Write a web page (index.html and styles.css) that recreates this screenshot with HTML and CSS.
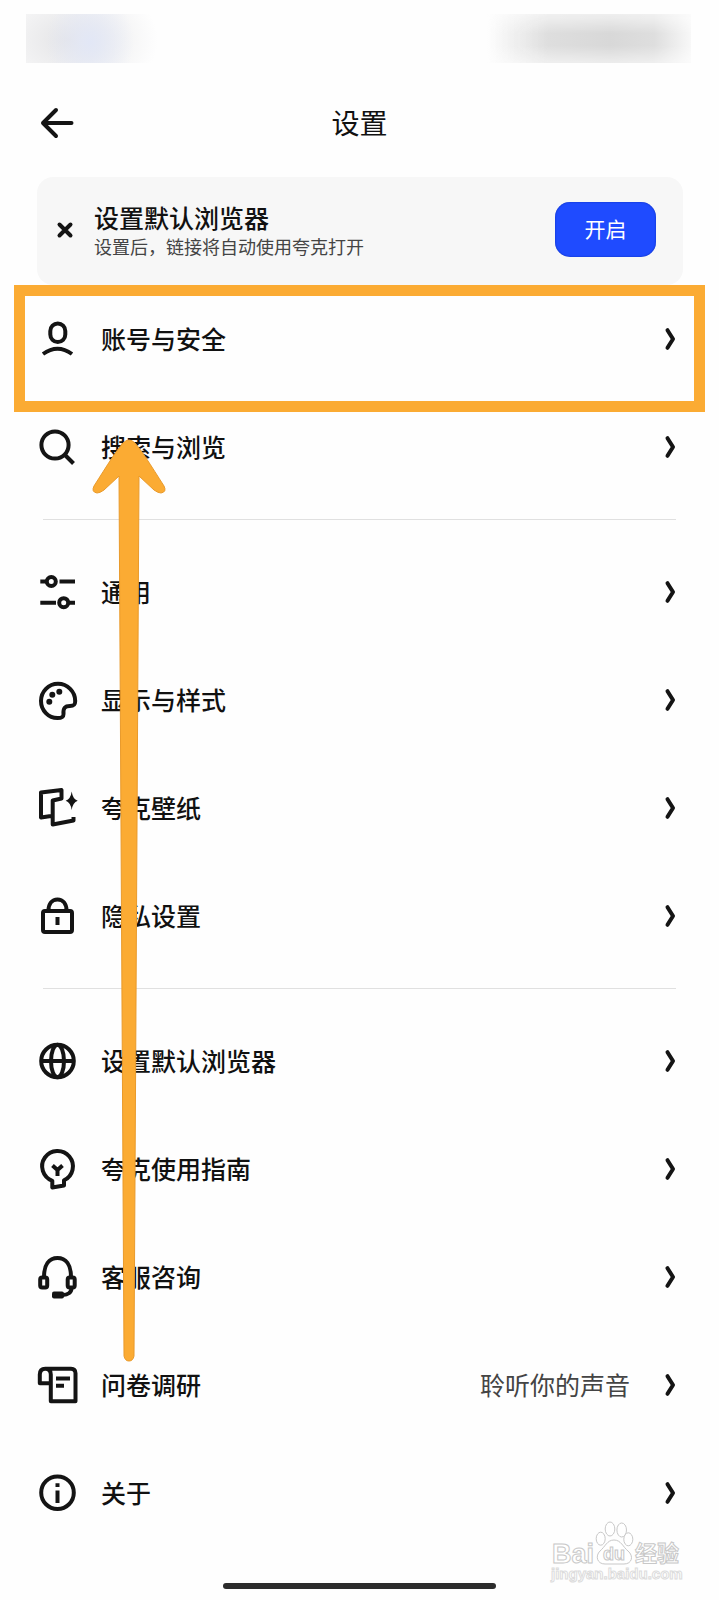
FILE: index.html
```html
<!DOCTYPE html>
<html lang="zh-CN">
<head>
    <meta charset="UTF-8">
    <meta name="viewport" content="width=device-width, initial-scale=1">
    <title>设置</title>
    <link rel="stylesheet" href="styles.css">
</head>
<body>
    <svg class="symbols" aria-hidden="true">
        <symbol id="chevron" viewBox="0 0 12 24">
            <path d="M3.5 3.2 9 12 3.5 20.8"/>
        </symbol>
    </svg>

    <div class="page">
        <div class="status-bar">
            <div class="status-left"></div>
            <div class="status-right"></div>
        </div>

        <header class="header">
            <button class="back" aria-label="返回">
                <svg class="back-icon" viewBox="0 0 36 36"><path d="M32.5 18H4M17 5 4 18l13 13"/></svg>
            </button>
            <h1 class="title">设置</h1>
        </header>

        <section class="card">
            <button class="close" aria-label="关闭">
                <svg class="close-icon" viewBox="0 0 18 18"><path d="m3.5 3.5 11 11M14.500 3.500l-11 11"/></svg>
            </button>
            <div class="card-text">
                <h2 class="card-title">设置默认浏览器</h2>
                <p class="card-desc">设置后，链接将自动使用夸克打开</p>
            </div>
            <button class="open">开启</button>
        </section>

        <nav class="menu">
            <ul class="group">
                <li class="item marked">
                    <a class="row" href="#account">
                        <svg class="icon" viewBox="0 0 40 40"><rect x="13.300" y="4.500" width="15" height="18.500" rx="7.500"/><path d="M6 35q14.500-10.500 29 0"/></svg>
                        <span class="name">账号与安全</span>
                        <svg class="chevron"><use href="#chevron"/></svg>
                    </a>
                </li>
                <li class="item">
                    <a class="row" href="#search">
                        <svg class="icon" viewBox="0 0 40 40"><circle cx="18" cy="18" r="13.600"/><path d="m27.500 27.500 9 9"/></svg>
                        <span class="name">搜索与浏览</span>
                        <svg class="chevron"><use href="#chevron"/></svg>
                    </a>
                </li>
            </ul>

            <ul class="group">
                <li class="item">
                    <a class="row" href="#general">
                        <svg class="icon" viewBox="0 0 40 40"><circle cx="14.300" cy="9.500" r="4.500"/><circle cx="26.700" cy="30.700" r="4.500"/><path d="M3.300 9.500H9M22.500 9.500H38M3.300 30.700H19M32 30.700h6"/></svg>
                        <span class="name">通用</span>
                        <svg class="chevron"><use href="#chevron"/></svg>
                    </a>
                </li>
                <li class="item">
                    <a class="row" href="#display">
                        <svg class="icon" viewBox="0 0 40 40"><path d="M38.200 21C38.200 11.500 30.500 3.800 21 3.800S4 11.500 4 21s7.500 17 16.500 17c4.500 0 6-1 6-4-.500-6 1.500-8 6.500-8 4 0 5.200-1 5.200-5z"/><g class="solid"><circle cx="15.300" cy="14.700" r="3"/><circle cx="22.300" cy="11.700" r="3"/><circle cx="12.300" cy="21.700" r="3"/></g></svg>
                        <span class="name">显示与样式</span>
                        <svg class="chevron"><use href="#chevron"/></svg>
                    </a>
                </li>
                <li class="item">
                    <a class="row" href="#wallpaper">
                        <svg class="icon" viewBox="0 0 40 40"><path d="M14 28 4 29.500V4.500L24.500 2V10.500L15.700 12.500V36.500L36.500 32.500V29"/><path class="solid" d="M34.700 3.500q1 7.500 6 9.200-5 1.800-6 9.300-1-7.500-6-9.300 5-1.700 6-9.200z"/></svg>
                        <span class="name">夸克壁纸</span>
                        <svg class="chevron"><use href="#chevron"/></svg>
                    </a>
                </li>
                <li class="item">
                    <a class="row" href="#privacy">
                        <svg class="icon" viewBox="0 0 40 40"><rect x="6" y="15" width="29" height="21" rx="2"/><path d="M11.500 14.500C11.500 8 15 3.500 20.500 3.500s9 4.500 9 11M20.500 21v8"/></svg>
                        <span class="name">隐私设置</span>
                        <svg class="chevron"><use href="#chevron"/></svg>
                    </a>
                </li>
            </ul>

            <ul class="group">
                <li class="item">
                    <a class="row" href="#browser">
                        <svg class="icon" viewBox="0 0 40 40"><circle cx="20.500" cy="20" r="16.300"/><ellipse cx="20.500" cy="20" rx="6.500" ry="16.300"/><path d="M4 20h33"/></svg>
                        <span class="name">设置默认浏览器</span>
                        <svg class="chevron"><use href="#chevron"/></svg>
                    </a>
                </li>
                <li class="item">
                    <a class="row" href="#guide">
                        <svg class="icon" viewBox="0 0 40 40"><path d="M15.300 38.500v-6.700A15.400 15.400 0 1 1 27 31.300V36.500z"/><path d="m15.500 16.500 5 4.500 5-4.500M20.500 20.500v6.500"/></svg>
                        <span class="name">夸克使用指南</span>
                        <svg class="chevron"><use href="#chevron"/></svg>
                    </a>
                </li>
                <li class="item">
                    <a class="row" href="#service">
                        <svg class="icon" viewBox="0 0 40 40"><path d="M7 20C7 8 12 1 20.500 1S34 8 34 20M34.500 31c0 4-3 7-9 7"/><rect x="3.200" y="20.500" width="7" height="10" rx="2"/><rect x="30.700" y="20.500" width="7" height="10" rx="2"/><rect class="solid" x="15" y="34.500" width="12" height="7" rx="2"/></svg>
                        <span class="name">客服咨询</span>
                        <svg class="chevron"><use href="#chevron"/></svg>
                    </a>
                </li>
                <li class="item">
                    <a class="row" href="#survey">
                        <svg class="icon" viewBox="0 0 40 40"><path d="M8.300 3.700H34q4.500 0 4.500 4.500V36.300H13.800V9.500q0-5.800-5.500-5.800T2.800 9.500v8.800h11M19 13.500h14M19 20.700h8"/></svg>
                        <span class="name">问卷调研</span>
                        <span class="hint">聆听你的声音</span>
                        <svg class="chevron"><use href="#chevron"/></svg>
                    </a>
                </li>
                <li class="item">
                    <a class="row" href="#about">
                        <svg class="icon" viewBox="0 0 40 40"><circle cx="20.500" cy="19.700" r="16.300"/><path d="M20.500 10.300V14M20.500 17.500v12.500"/></svg>
                        <span class="name">关于</span>
                        <svg class="chevron"><use href="#chevron"/></svg>
                    </a>
                </li>
            </ul>

            <!-- arrow pointing up at the marked row -->
            <svg class="arrow" viewBox="0 0 74 924">
                <path d="M31 4Q37-2 43 4C50 12 58 25 72 47Q75 53 69 54Q66 54 62 51L47 37 42 917Q41 922 37 922T32 917L27 37 12 51Q8 54 5 54Q-1 53 2 47C16 25 24 12 31 4z"/>
            </svg>
        </nav>

        <footer class="footer">
            <div class="home-bar"></div>
            <svg class="watermark" viewBox="0 0 132 66">
                <ellipse cx="50.700" cy="16.700" rx="4.500" ry="6.500"/>
                <ellipse cx="60" cy="7" rx="4.800" ry="7"/>
                <ellipse cx="71.700" cy="8" rx="4.800" ry="7"/>
                <ellipse cx="78.300" cy="17.300" rx="4.500" ry="6.500"/>
                <path d="M64 18c7 0 9 7 14 11 6 5 4 13-4 13H55c-8 0-10-8-5-13 5-4 7-11 14-11z"/>
                <text class="wm-logo" x="2" y="41">Bai</text>
                <text class="wm-du" x="53" y="38">du</text>
                <text class="wm-cn" x="85" y="39">经验</text>
                <text class="wm-url" x="1" y="57">jingyan.baidu.com</text>
            </svg>
        </footer>
    </div>
</body>
</html>
```

FILE: styles.css
```css
* {
    box-sizing: border-box;
}

body {
    margin: 0;
    background: #fefefe;
    color: #111;
    font-family: "Noto Sans CJK SC", sans-serif;
}

h1, h2, p, ul {
    margin: 0;
    padding: 0;
    font-weight: 400;
}

button {
    border: 0;
    padding: 0;
    background: none;
    color: inherit;
    font-family: inherit;
    cursor: pointer;
}

svg {
    display: block;
    fill: none;
    stroke: #141414;
}

.symbols {
    display: none;
}

.page {
    position: relative;
    min-height: 100vh;
    display: flex;
    flex-direction: column;
}

/* blurred status bar */
.status-bar {
    display: flex;
    justify-content: space-between;
    padding: 14px 28px 6px 26px;
}

.status-left {
    width: 140px;
    height: 49px;
    background:
        radial-gradient(ellipse 44px 50px at 64px 28px, #e2e7f6, transparent),
        radial-gradient(ellipse 90px 64px at 42px 26px, #e4e4e6, transparent);
}

.status-right {
    width: 204px;
    height: 49px;
    background: linear-gradient(to right, transparent, #dedede 30%, #d8d8d8 60%, #dedede 82%, #f8f8f8);
    mask-image: linear-gradient(#0006, #000 40%, #000 65%, #0007);
}

.header {
    display: grid;
    grid-template-columns: 36px 1fr 36px;
    align-items: center;
    height: 108px;
    padding: 0 39px;
}

.back-icon {
    width: 36px;
    height: 36px;
    stroke-width: 4;
    stroke-linecap: round;
    stroke-linejoin: round;
}

.title {
    padding-bottom: 3px;
    font-size: 28px;
    line-height: 40px;
    text-align: center;
}

.card {
    display: flex;
    align-items: center;
    height: 108px;
    margin: 0 36px 0 37px;
    padding: 0 27px 3px 19px;
    border-radius: 16px;
    background: #f7f7f7;
}

.close-icon {
    width: 18px;
    height: 18px;
    stroke-width: 4;
    stroke-linecap: round;
}

.card-text {
    flex: 1;
    margin-left: 20px;
}

.card-title {
    font-size: 25px;
    font-weight: 500;
    line-height: 32px;
}

.card-desc {
    color: #444;
    font-size: 18px;
    line-height: 26px;
}

.open {
    width: 101px;
    height: 55px;
    padding-bottom: 3px;
    border-radius: 15px;
    background: #1f4bff;
    box-shadow: inset 0 0 2px #0a2bb0;
    color: #fff;
    font-size: 21px;
}

.menu {
    position: relative;
}

.group {
    list-style: none;
    padding: 0 43px 0 37px;
}

.group + .group::before {
    content: "";
    display: block;
    height: 1px;
    margin: 18px 0 18px 6px;
    background: #e0e0e0;
}

.item {
    position: relative;
}

.row {
    display: flex;
    align-items: center;
    height: 108px;
    color: inherit;
    text-decoration: none;
}

/* frame drawn round the highlighted row */
.marked::after {
    content: "";
    position: absolute;
    top: 0;
    right: -29px;
    bottom: -19px;
    left: -23px;
    border: 11px solid #fbab33;
    pointer-events: none;
}

.icon {
    width: 40px;
    height: 40px;
    margin-right: 24px;
    stroke-width: 4;
    stroke-linejoin: round;
    overflow: visible;
}

.solid {
    fill: #141414;
    stroke: none;
}

.name,
.hint {
    padding-bottom: 3px;
    font-size: 25px;
    line-height: 36px;
}

.name {
    flex: 1;
    font-weight: 500;
}

.hint {
    margin-right: 34px;
    color: #444;
}

.chevron {
    width: 12px;
    height: 24px;
    stroke-width: 4;
    stroke-linecap: round;
    stroke-linejoin: round;
}

.arrow {
    position: absolute;
    top: 154px;
    left: 92px;
    width: 74px;
    fill: #fbab33;
    stroke: #e99a2b;
    pointer-events: none;
}

.footer {
    display: flex;
    flex: 1;
    align-items: flex-end;
    justify-content: center;
    padding: 30px 0 11px;
}

.home-bar {
    width: 38%;
    height: 6px;
    border-radius: 3px;
    background: #2c2c2c;
}

.watermark {
    position: absolute;
    right: 37px;
    bottom: 12px;
    width: 132px;
    height: 66px;
    fill: #fff;
    stroke: #c8c8c8;
    font-family: "Liberation Sans", "Noto Sans CJK SC", sans-serif;
    font-weight: 700;
    overflow: visible;
}

.wm-logo {
    font-size: 27px;
}

.wm-du {
    font-size: 18px;
}

.wm-cn {
    font-size: 22px;
}

.wm-url {
    font-size: 15px;
    stroke: #dcdcdc;
}
```
